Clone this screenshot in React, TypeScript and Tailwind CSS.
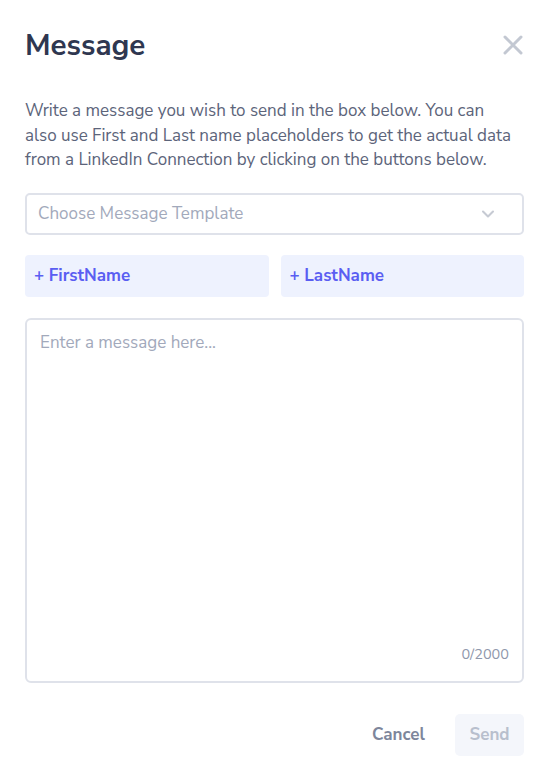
import { ChevronDown } from "lucide-react";

const font = { fontFamily: '"Nunito Sans", Lato, "Noto Sans", sans-serif' };

export default function App() {
  return (
    <div className="h-[780px] w-[552px] bg-white" style={font}>
      <div className="flex flex-col pl-[25px] pr-[28px] pt-[26px]">
        <div className="flex items-center justify-between">
          <h1 className="text-[29.5px] font-bold leading-[38px] text-[#2f3750]">Message</h1>
          <svg width="20" height="20" viewBox="0 0 20 20" className="mr-[1px] text-[#c3c8d2]">
            <path d="M2 2 L18 18 M18 2 L2 18" stroke="currentColor" strokeWidth="3" strokeLinecap="round" />
          </svg>
        </div>

        <p className="mt-[35px] text-[17px] leading-[24.5px] text-[#5c647a]">
          Write a message you wish to send in the box below. You can
          <br />
          also use First and Last name placeholders to get the actual data
          <br />
          from a LinkedIn Connection by clicking on the buttons below.
        </p>

        <div className="mt-[20px] flex h-[42px] items-center justify-between rounded-[5px] border-2 border-[#dfe2ea] pl-[11px] pr-[24px]">
          <span className="text-[17px] text-[#a2a9bb]">Choose Message Template</span>
          <ChevronDown size={20} strokeWidth={2.5} className="text-[#c6cad3]" />
        </div>

        <div className="mt-[20px] grid grid-cols-2 gap-[12px]">
          <button className="flex h-[42px] items-center rounded-[4px] bg-[#eef2fe] pl-[9px] text-[17px] font-bold text-[#5a5ef2]">
            + FirstName
          </button>
          <button className="flex h-[42px] items-center rounded-[4px] bg-[#eef2fe] pl-[9px] text-[17px] font-bold text-[#5a5ef2]">
            + LastName
          </button>
        </div>

        <div className="mt-[21px] flex h-[365px] flex-col justify-between rounded-[6px] border-2 border-[#dfe2ea] pb-[15px] pl-[13px] pr-[13px] pt-[10px]">
          <span className="text-[17px] text-[#a2a9bb]">Enter a message here...</span>
          <span className="self-end text-[14.5px] text-[#8f97ab]">0/2000</span>
        </div>

        <div className="mt-[31px] flex items-center justify-end gap-[30px]">
          <button className="text-[17px] font-bold text-[#7d869b]">Cancel</button>
          <button className="h-[42px] w-[69px] rounded-[5px] bg-[#f4f6fb] text-[17px] font-bold text-[#b8bfcd]">
            Send
          </button>
        </div>
      </div>
    </div>
  );
}
